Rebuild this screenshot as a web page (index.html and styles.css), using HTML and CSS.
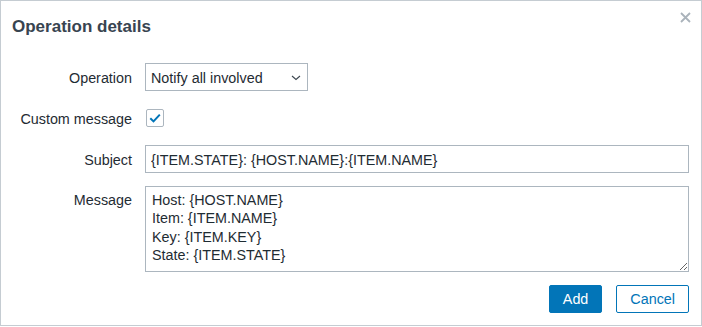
FILE: index.html
```html
<!DOCTYPE html>
<html>
<head>
<meta charset="utf-8">
<link rel="stylesheet" href="styles.css">
</head>
<body>
<div class="dialog">
  <div class="header">
    <h2 class="title">Operation details</h2>
    <button class="close" aria-label="Close">
      <svg width="11" height="11" viewBox="0 0 11 11"><path d="M1 1 L10 10 M10 1 L1 10" stroke="#aab3bb" stroke-width="1.8" fill="none"/></svg>
    </button>
  </div>
  <form class="form">
    <label class="label">Operation</label>
    <div class="field">
      <div class="select">
        <span>Notify all involved</span>
        <svg width="10" height="6" viewBox="0 0 10 6"><path d="M1 1 L5 4.5 L9 1" stroke="#3d4750" stroke-width="1.1" fill="none"/></svg>
      </div>
    </div>
    <label class="label">Custom message</label>
    <div class="field">
      <span class="checkbox">
        <svg width="16" height="16" viewBox="0 0 16 16"><path d="M3.3 8.3 L6.5 11.4 L12.8 4.6" stroke="#0275b8" stroke-width="2" fill="none"/></svg>
      </span>
    </div>
    <label class="label">Subject</label>
    <div class="field">
      <input class="input" type="text" value="{ITEM.STATE}: {HOST.NAME}:{ITEM.NAME}">
    </div>
    <label class="label label-top">Message</label>
    <div class="field">
      <textarea class="textarea">Host: {HOST.NAME}
Item: {ITEM.NAME}
Key: {ITEM.KEY}
State: {ITEM.STATE}</textarea>
    </div>
  </form>
  <div class="footer">
    <button class="btn btn-primary">Add</button>
    <button class="btn btn-alt">Cancel</button>
  </div>
</div>
</body>
</html>
```
FILE: styles.css
```css
html, body {
  margin: 0;
  padding: 0;
  background: #ffffff;
}
body {
  font-family: "Liberation Sans", Arial, sans-serif;
  font-size: 14.35px;
  color: #1f2c33;
}
.dialog {
  position: relative;
  width: 702px;
  height: 326px;
  box-sizing: border-box;
  border: 1px solid #c5ccd2;
  padding: 0 12px 0 11px;
  background: #fff;
}
.header {
  padding-top: 16px;
  height: 46px;
}
.title {
  margin: 0;
  font-size: 17px;
  line-height: 20px;
  font-weight: bold;
  color: #384450;
}
.close {
  position: absolute;
  top: 11px;
  right: 10px;
  width: 11px;
  height: 11px;
  padding: 0;
  border: 0;
  background: none;
  display: flex;
}
.form {
  display: grid;
  grid-template-columns: 120px 1fr;
  column-gap: 13px;
  row-gap: 13px;
}
.label {
  text-align: right;
  line-height: 26px;
  padding-top: 2px;
  white-space: nowrap;
}
.label-top {
  line-height: 18px;
  padding-top: 5px;
}
.field {
  display: flex;
  align-items: center;
  height: auto;
  min-height: 28px;
}
.select {
  width: 163px;
  height: 28px;
  box-sizing: border-box;
  border: 1px solid #acb6bf;
  display: flex;
  align-items: center;
  justify-content: space-between;
  padding: 1px 6px 0 5px;
  background: #fff;
}
.checkbox {
  width: 18px;
  height: 18px;
  box-sizing: border-box;
  border: 1px solid #acb6bf;
  border-radius: 2px;
  display: flex;
  align-items: center;
  justify-content: center;
  margin-left: 1px;
}
.input {
  width: 100%;
  height: 28px;
  box-sizing: border-box;
  border: 1px solid #acb6bf;
  padding: 1px 5px 0;
  font: inherit;
  color: #1f2c33;
  outline: none;
}
.textarea {
  width: 100%;
  height: 86px;
  box-sizing: border-box;
  border: 1px solid #acb6bf;
  padding: 4px 6px;
  font-family: "Liberation Sans", Arial, sans-serif;
  font-size: 14.35px;
  line-height: 18.3px;
  color: #1f2c33;
  outline: none;
  resize: both;
  display: block;
}
.footer {
  display: flex;
  justify-content: flex-end;
  gap: 14px;
  margin-top: 13px;
}
.btn {
  height: 28px;
  padding: 0 13px;
  border-radius: 2px;
  font-family: "Liberation Sans", Arial, sans-serif;
  font-size: 14.35px;
  border: 1px solid #0275b8;
  cursor: pointer;
}
.btn-primary {
  background: #0275b8;
  color: #ffffff;
}
.btn-alt {
  background: #ffffff;
  color: #0275b8;
}
```
